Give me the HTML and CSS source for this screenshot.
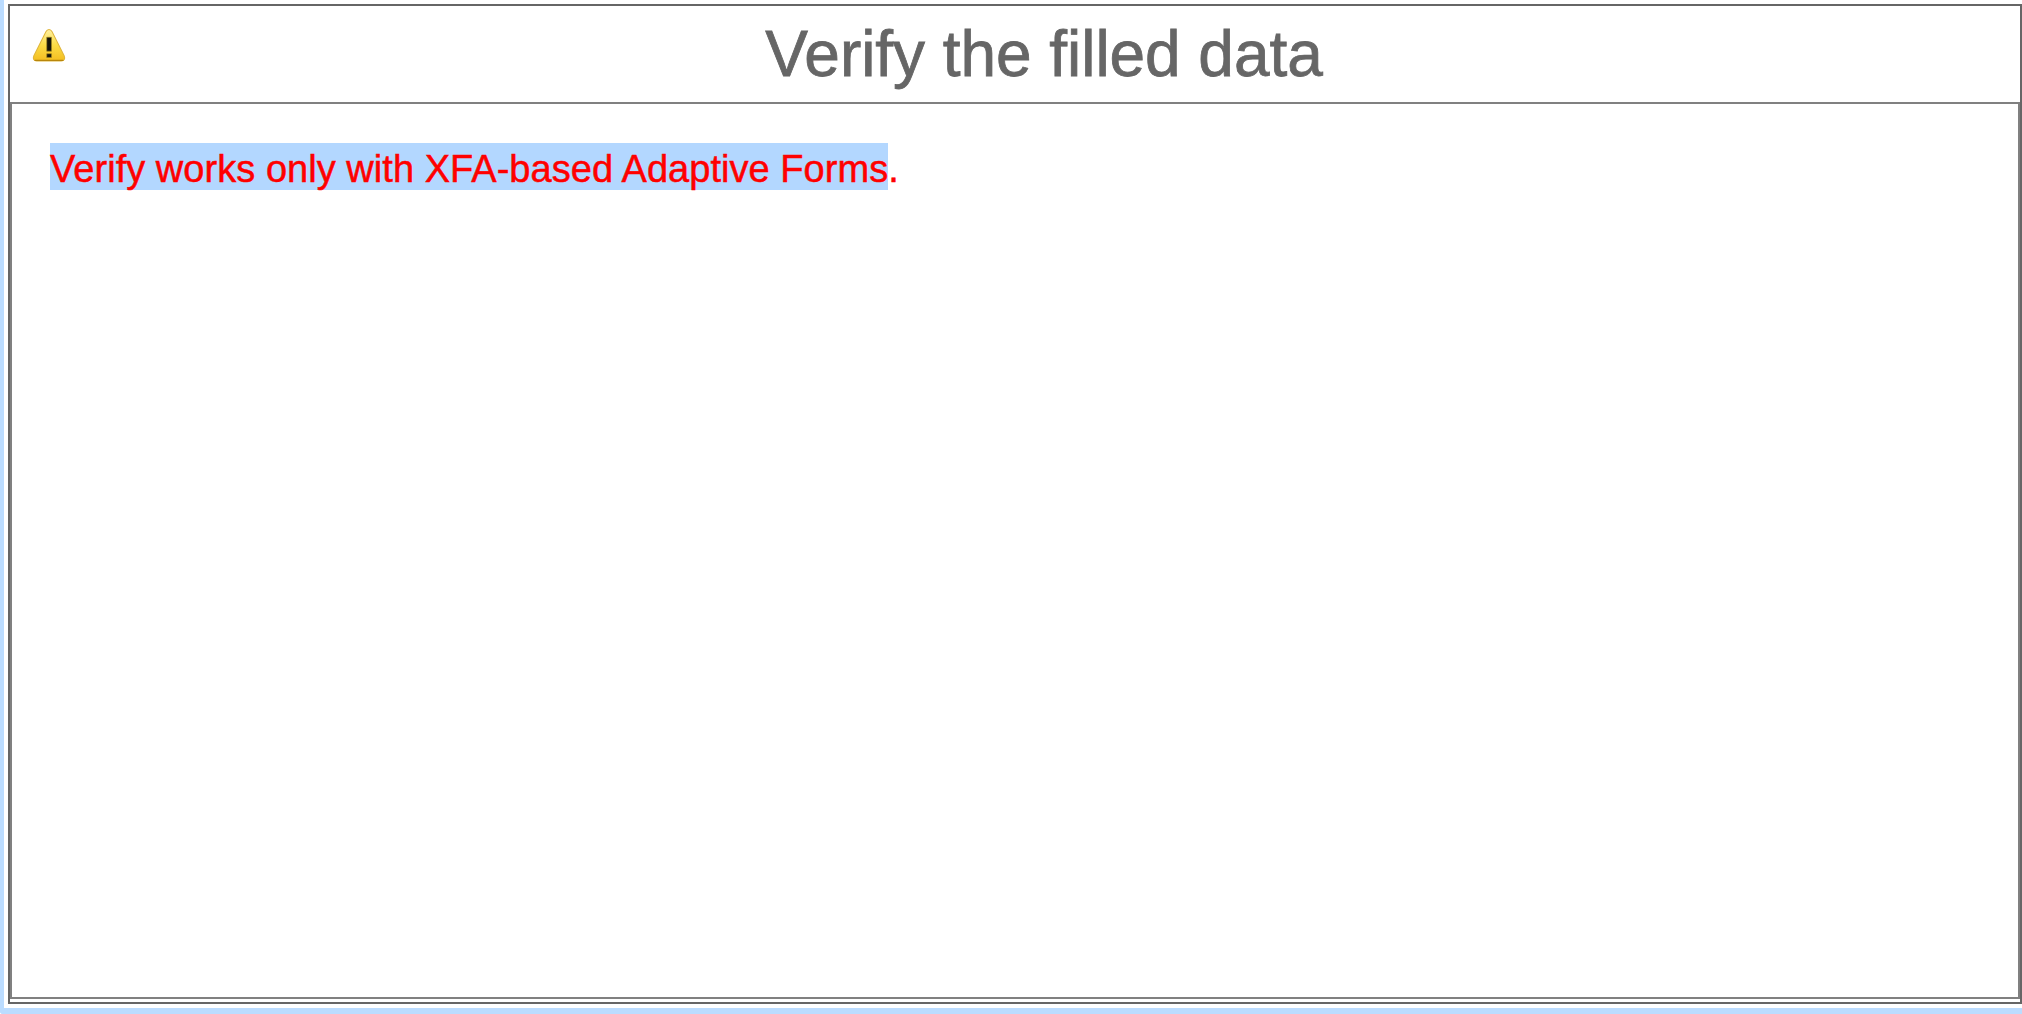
FILE: index.html
```html
<!DOCTYPE html>
<html lang="en">

<head>
    <meta charset="UTF-8">
    <meta name="viewport" content="width=device-width, initial-scale=1.0">
    <title>Verify</title>
    <link rel="stylesheet" href="styles.css">
</head>

<body>

    <div class="component">
        <div class="verify">
            <div class="header">
                <svg class="warning" viewBox="0 0 32 33" width="34" height="34">
                    <defs>
                        <linearGradient id="yellow" x1="0" y1="0" x2="0" y2="1">
                            <stop offset="0" stop-color="#fff0a0" />
                            <stop offset="0.5" stop-color="#fbdc45" />
                            <stop offset="1" stop-color="#f3bd20" />
                        </linearGradient>
                    </defs>
                    <path d="M16 1.500c1.500 0 2.400 1 3 2.200l11.700 23.300c1.200 2.700 0 5-2.700 5H4c-2.700 0-3.900-2.300-2.700-5L13 3.700c.6-1.200 1.500-2.200 3-2.200z"
                        fill="url(#yellow)" stroke="#dfb53c" stroke-width="1" />
                    <path d="M2.500 31.500h27" stroke="#b8860b" stroke-width="1.200" stroke-linecap="round" />
                    <path d="M13.800 9h4.600v13.500h-4.600zM13.800 25h4.600v3.600h-4.600z" fill="#14140a" stroke="#a08620" stroke-width="0.600" />
                </svg>
                <h1 class="title">Verify the filled data</h1>
            </div>
            <div class="content">
                <p class="message"><span class="selected">Verify works only with XFA-based Adaptive Forms</span>.</p>
            </div>
        </div>
    </div>

</body>

</html>
```

FILE: styles.css
```css
* {
    box-sizing: border-box;
}

body {
    margin: 0;
    height: 100vh;
    background: #fff;
    font-family: "Liberation Sans", Arial, sans-serif;
}

/* blue frame around the component */
.component {
    height: 100vh;
    padding: 4px 0 4px 4px;
    border-left: 4px solid #bbdcff;
    border-bottom: 6px solid #bbdcff;
    border-bottom-left-radius: 3px;
}

.verify {
    display: flex;
    flex-direction: column;
    height: 100%;
    padding-bottom: 3px;
    border: 2px solid #666;
}

.header {
    display: flex;
    align-items: flex-start;
    height: 96px;
}

.warning {
    flex: none;
    margin: 22px 2px 0 22px;
}

.title {
    flex: 1;
    margin: 11px 0 0;
    color: #666;
    font-size: 64px;
    font-weight: normal;
    line-height: 75px;
    letter-spacing: -0.05px;
    text-align: center;
    -webkit-text-stroke: 0.8px #666;
}

.content {
    flex: 1;
    padding: 40px 38px;
    border: 2px solid #808080;
}

.message {
    margin: 0;
    color: #f00;
    font-size: 38px;
    line-height: 50px;
    letter-spacing: 0.04px;
    -webkit-text-stroke: 0.5px #f00;
}

.selected {
    padding: 5px 0 0;
    background: #b3d7ff;
}
```
